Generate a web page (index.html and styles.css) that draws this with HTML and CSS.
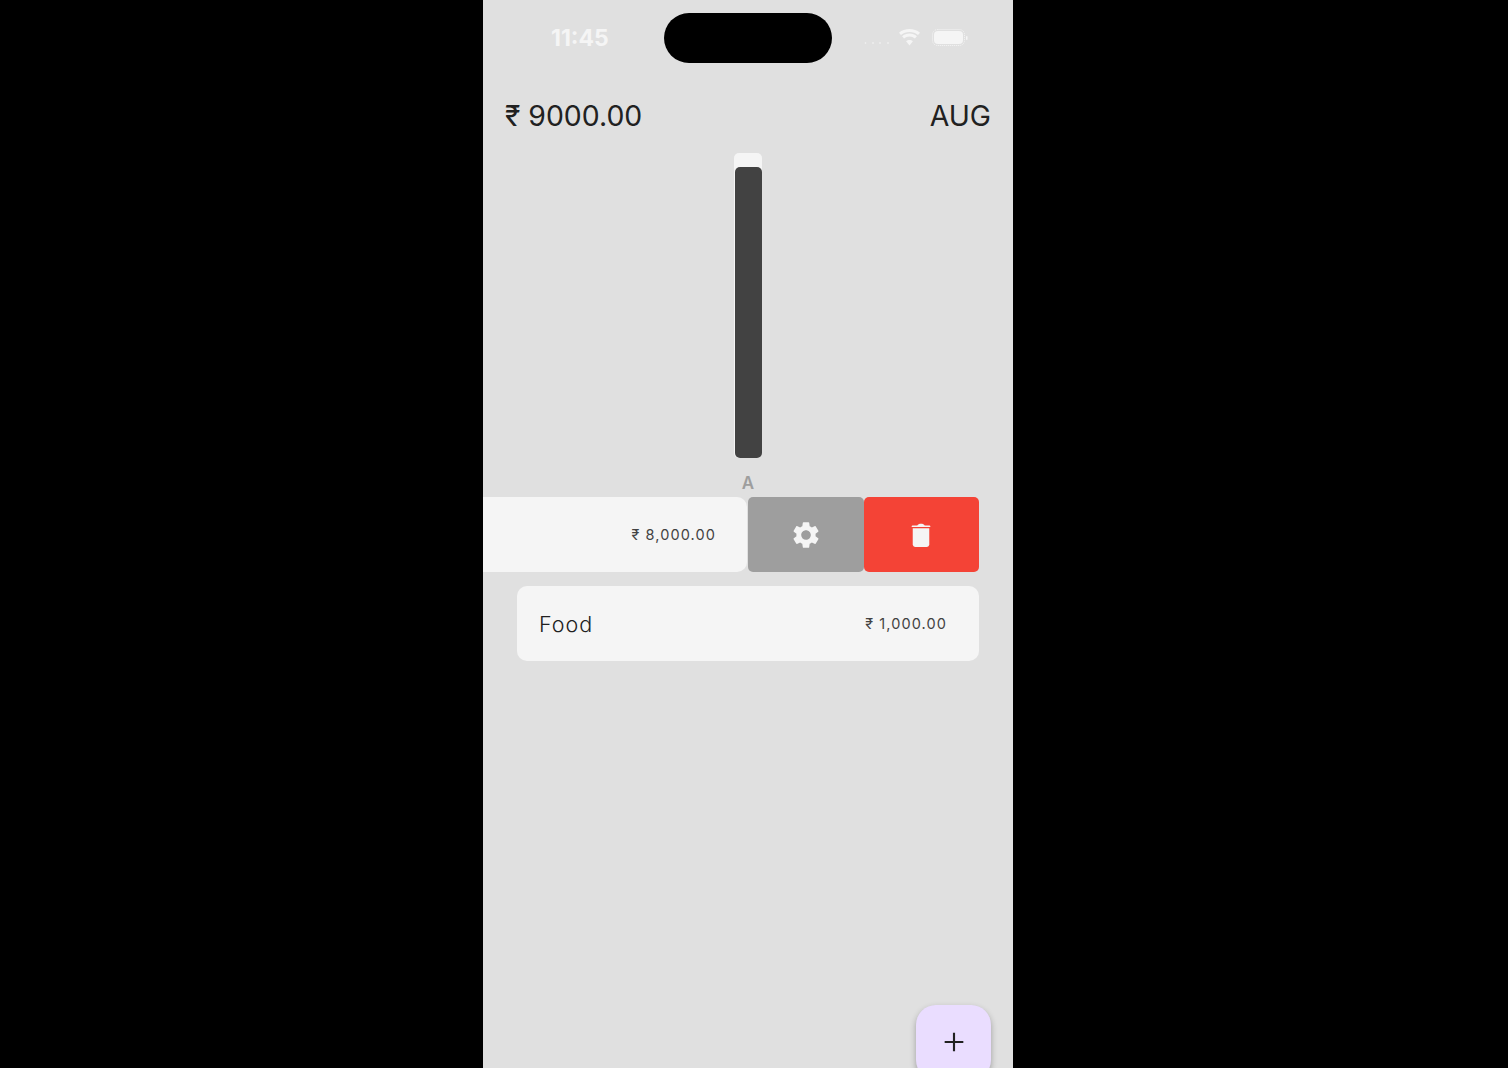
FILE: index.html
```html
<!DOCTYPE html>
<html lang="en">
<head>
<meta charset="utf-8">
<title>Budget</title>
<link rel="stylesheet" href="styles.css">
</head>
<body>
<main class="phone">
  <div class="status">
    <span class="time">11:45</span>
    <div class="island"></div>
    <div class="status-icons">
      <svg class="signal" width="26" height="4" viewBox="0 0 26 4"><circle cx="1.5" cy="2" r=".8"/><circle cx="9" cy="2" r=".8"/><circle cx="16" cy="2" r=".8"/><circle cx="24" cy="2" r=".8"/></svg>
      <svg class="wifi" width="23" height="17" viewBox="0 0 23 17"><path d="M11.500 3c3.300 0 6.300 1.100 8.500 3l2-2.300C19.200 1.300 15.500 0 11.500 0S3.800 1.300 1 3.700L3 6c2.200-1.900 5.200-3 8.500-3Z"/><path d="M11.500 7.500c2.100 0 4 .7 5.400 2l2-2.300C16.900 5.400 14.300 4.400 11.500 4.400S6.100 5.400 4.100 7.200l2 2.300c1.400-1.300 3.300-2 5.400-2Z"/><path d="M11.500 11c-1.300 0-2.500.5-3.400 1.300l3.400 4.200 3.400-4.200c-.9-.8-2.100-1.300-3.400-1.300Z"/></svg>
      <svg class="battery" width="37" height="18" viewBox="0 0 37 18"><rect x=".5" y=".5" width="32" height="16" rx="5" fill="none" stroke="#f5f5f5" stroke-dasharray="1 1"/><rect x="2" y="2" width="29" height="13" rx="4"/><rect x="34" y="7" width="1.500" height="4" rx=".7"/></svg>
    </div>
  </div>

  <header class="summary">
    <span>₹ 9000.00</span>
    <span>AUG</span>
  </header>

  <section class="chart">
    <div class="track"><div class="fill"></div></div>
    <span class="bar-label">A</span>
  </section>

  <section class="rows">
    <div class="row swiped">
      <div class="card clipped"><span class="amount">₹ 8,000.00</span></div>
      <button class="action settings" aria-label="Settings">
        <svg width="32" height="32" viewBox="0 0 24 24"><path d="M19.140 12.940c.04-.3.060-.61.060-.94 0-.32-.02-.64-.07-.94l2.030-1.580a.49.490 0 0 0 .12-.61l-1.920-3.320a.488.488 0 0 0-.59-.22l-2.390.96c-.5-.38-1.030-.7-1.620-.94l-.36-2.540a.484.484 0 0 0-.48-.41h-3.840c-.24 0-.43.170-.47.410l-.36 2.540c-.59.240-1.130.57-1.620.94l-2.390-.96c-.22-.08-.47 0-.59.220L2.740 8.870c-.12.210-.08.470.12.610l2.030 1.580c-.05.3-.09.630-.09.940s.02.640.07.940l-2.030 1.580a.49.490 0 0 0-.12.610l1.920 3.320c.12.220.37.290.59.220l2.390-.96c.5.380 1.030.7 1.620.94l.36 2.540c.05.240.24.410.48.410h3.840c.24 0 .44-.17.470-.41l.36-2.540c.59-.24 1.130-.56 1.620-.94l2.390.96c.22.080.47 0 .59-.22l1.920-3.320c.12-.22.070-.47-.12-.61l-2.010-1.580ZM12 15.600A3.610 3.610 0 0 1 8.400 12c0-1.980 1.620-3.600 3.600-3.600s3.600 1.620 3.600 3.600-1.620 3.600-3.600 3.600Z"/></svg>
      </button>
      <button class="action remove" aria-label="Delete">
        <svg width="32" height="32" viewBox="0 0 24 24"><path d="M5 6h14v-.6c0-.4-.3-.6-.7-.6h-3.500c-.5-.8-1.500-1.200-2.800-1.200s-2.300.4-2.800 1.200H5.700c-.4 0-.7.2-.7.6V6Z"/><path d="M5.800 7h12.400v12c0 1.100-.9 2-2 2H7.800c-1.100 0-2-.9-2-2V7Z"/></svg>
      </button>
    </div>
    <div class="row">
      <div class="card full">
        <span class="name">Food</span>
        <span class="amount">₹ 1,000.00</span>
      </div>
    </div>
  </section>

  <button class="fab" aria-label="Add">
    <svg width="32" height="32" viewBox="0 0 24 24"><path d="M19 12.800h-6.200V19h-1.600v-6.200H5v-1.600h6.200V5h1.600v6.200H19v1.600Z"/></svg>
  </button>
</main>
</body>
</html>
```
FILE: styles.css
```css
* {
  box-sizing: border-box;
}

html,
body {
  height: 100%;
}

body {
  margin: 0;
  padding-left: 483px;
  background: #000;
  font-family: Inter, "Liberation Sans", sans-serif;
  overflow: hidden;
}

.phone {
  position: relative;
  width: 530px;
  height: 1068px;
  background: #e0e0e0;
  overflow: hidden;
  color: #212121;
}

.status {
  display: flex;
  align-items: center;
  height: 50px;
  margin-top: 13px;
  padding-left: 68px;
}

.time {
  width: 113px;
  font-size: 23px;
  font-weight: 700;
  color: #f5f5f5;
}

.island {
  width: 168px;
  height: 50px;
  border-radius: 25px;
  background: #000;
}

.status-icons {
  display: flex;
  align-items: center;
  margin-left: 32px;
  fill: #f5f5f5;
}

.signal {
  margin-top: 10px;
}

.wifi {
  margin-left: 8px;
  margin-top: -2px;
}

.battery {
  margin-left: 11px;
}

.summary {
  display: flex;
  justify-content: space-between;
  align-items: center;
  height: 36px;
  margin-top: 35px;
  padding: 0 22px;
  font-size: 28.400px;
  line-height: 36px;
}

.chart {
  display: flex;
  flex-direction: column;
  align-items: center;
  margin-top: 19px;
}

.track {
  display: flex;
  flex-direction: column;
  justify-content: flex-end;
  align-items: center;
  width: 28px;
  height: 305px;
  border-radius: 5px;
  background: #f5f5f5;
}

.fill {
  width: 27px;
  height: 291px;
  border-radius: 5px;
  background: #424242;
}

.bar-label {
  margin-top: 15px;
  font-size: 17px;
  line-height: 20px;
  font-weight: 600;
  color: #9e9e9e;
}

.rows {
  display: flex;
  flex-direction: column;
  gap: 14px;
  margin-top: 4px;
}

.row {
  display: flex;
  height: 75px;
  padding: 0 34px;
}

.swiped {
  padding: 0;
}

.card {
  display: flex;
  align-items: center;
  background: #f5f5f5;
  border-radius: 0 10px 10px 0;
}

.clipped {
  justify-content: flex-end;
  width: 264px;
  margin-right: 1px;
  padding-right: 31px;
}

.full {
  flex: 1;
  justify-content: space-between;
  padding: 0 32px 0 22px;
  border-radius: 10px;
}

.name {
  font-size: 21.500px;
  font-weight: 300;
  letter-spacing: 1px;
  color: #212121;
}

.amount {
  font-size: 14.500px;
  letter-spacing: 1.100px;
  color: #424242;
}

.action {
  display: flex;
  align-items: center;
  justify-content: center;
  width: 115.500px;
  padding: 0;
  border: 0;
  border-radius: 5px;
  fill: #f5f5f5;
}

.settings {
  background: #9e9e9e;
}

.remove {
  background: #f44336;
}

.fab {
  position: absolute;
  top: 1005px;
  left: 433px;
  display: flex;
  align-items: center;
  justify-content: center;
  width: 75px;
  height: 75px;
  padding: 0 0 2px;
  border: 0;
  border-radius: 20px;
  background: #eaddff;
  box-shadow: 0 3px 6px rgba(0, 0, 0, 0.3);
  fill: #212121;
}
```
